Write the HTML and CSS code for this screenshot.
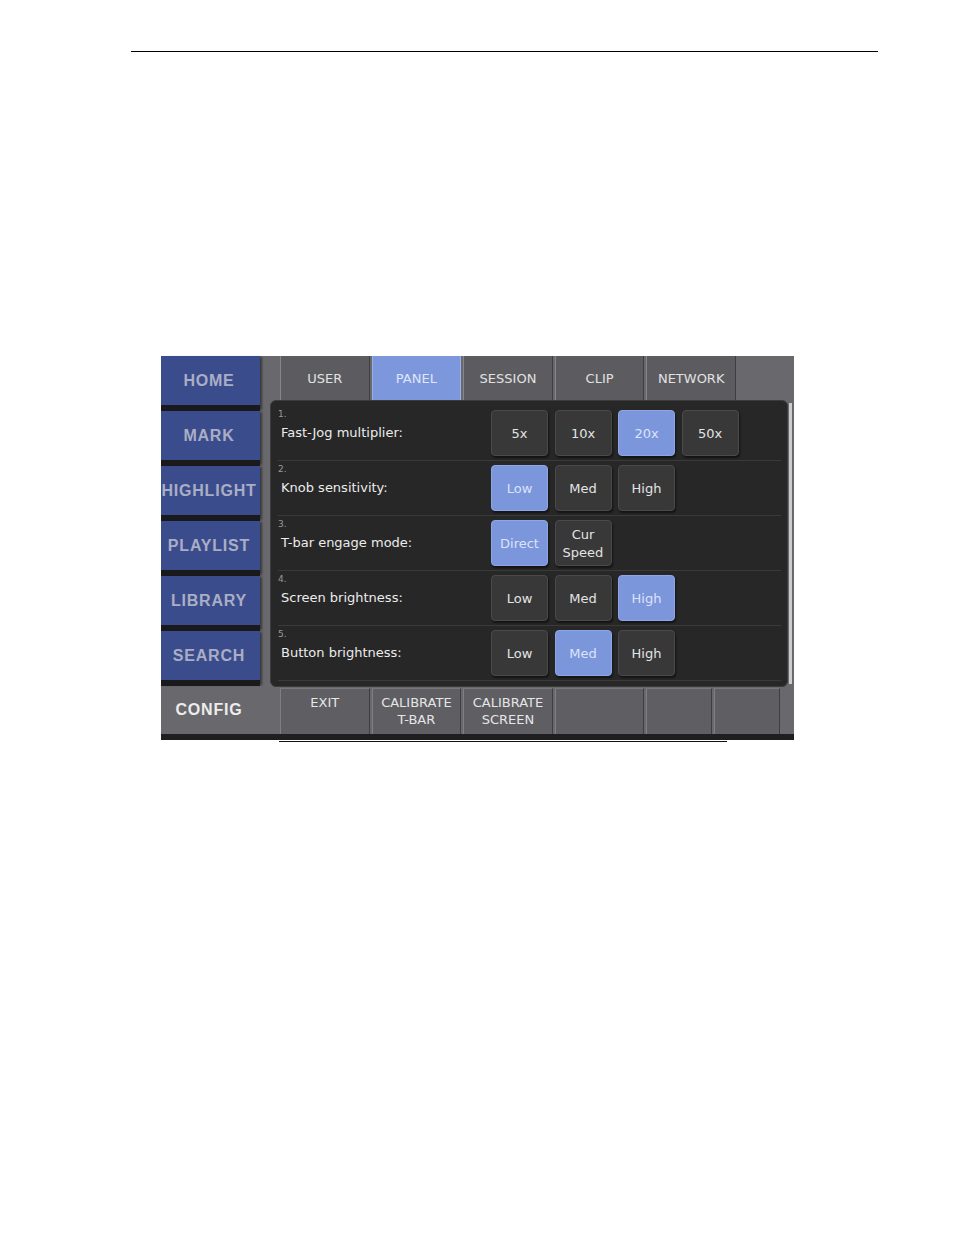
FILE: index.html
```html
<!DOCTYPE html>
<html>
<head>
<meta charset="utf-8">
<link rel="stylesheet" href="styles.css">
</head>
<body>
<div class="page">
  <div class="rule"></div>
  <figure class="shot">
    <div class="ui">
      <nav class="side">
        <div class="sb">HOME</div>
        <div class="sb">MARK</div>
        <div class="sb">HIGHLIGHT</div>
        <div class="sb">PLAYLIST</div>
        <div class="sb">LIBRARY</div>
        <div class="sb">SEARCH</div>
        <div class="sb config">CONFIG</div>
      </nav>
      <div class="main">
        <div class="tabs">
          <div class="tab">USER</div>
          <div class="tab on">PANEL</div>
          <div class="tab">SESSION</div>
          <div class="tab">CLIP</div>
          <div class="tab">NETWORK</div>
        </div>
        <div class="body">
          <div class="panel">
            <div class="row">
              <div class="label"><div class="num">1.</div><div class="text">Fast-Jog multiplier:</div></div>
              <div class="opts">
                <div class="btn">5x</div>
                <div class="btn">10x</div>
                <div class="btn on">20x</div>
                <div class="btn">50x</div>
              </div>
            </div>
            <div class="row">
              <div class="label"><div class="num">2.</div><div class="text">Knob sensitivity:</div></div>
              <div class="opts">
                <div class="btn on">Low</div>
                <div class="btn">Med</div>
                <div class="btn">High</div>
              </div>
            </div>
            <div class="row">
              <div class="label"><div class="num">3.</div><div class="text">T-bar engage mode:</div></div>
              <div class="opts">
                <div class="btn on">Direct</div>
                <div class="btn">Cur<br>Speed</div>
              </div>
            </div>
            <div class="row">
              <div class="label"><div class="num">4.</div><div class="text">Screen brightness:</div></div>
              <div class="opts">
                <div class="btn">Low</div>
                <div class="btn">Med</div>
                <div class="btn on">High</div>
              </div>
            </div>
            <div class="row">
              <div class="label"><div class="num">5.</div><div class="text">Button brightness:</div></div>
              <div class="opts">
                <div class="btn">Low</div>
                <div class="btn on">Med</div>
                <div class="btn">High</div>
              </div>
            </div>
          </div>
          <div class="scroll"><div class="thumb"></div></div>
        </div>
        <div class="actions">
          <div class="act">EXIT</div>
          <div class="act">CALIBRATE<br>T-BAR</div>
          <div class="act">CALIBRATE<br>SCREEN</div>
          <div class="act"></div>
          <div class="act sm"></div>
          <div class="act sm"></div>
        </div>
      </div>
    </div>
    <div class="underline"></div>
  </figure>
</div>
</body>
</html>
```
FILE: styles.css
```css
* { box-sizing: border-box; }
body { margin: 0; background: #fff; font-family: "DejaVu Sans", "Liberation Sans", sans-serif; }
.page { padding-top: 51px; }
.rule { margin-left: 131px; width: 747px; height: 1px; background: #000; }
.shot { margin: 304px 0 0 161px; width: 633px; }
.ui { display: flex; width: 633px; background: #68686d; border-bottom: 6px solid #1f1f21; }

.side { width: 99px; display: flex; flex-direction: column; }
.sb {
  height: 55px; border-bottom: 6px solid #1a1a1c; background: #3b4c8d;
  color: #a9aec4; font: bold 16px "Liberation Sans", Arial, sans-serif; letter-spacing: 0.8px;
  display: flex; align-items: center; justify-content: center; padding-right: 3px;
  white-space: nowrap; overflow: hidden;
  box-shadow: 3px 0 2px -1px rgba(0, 0, 0, 0.45);
}
.sb.config { height: 48px; border-bottom: 0; background: transparent; color: #ececec; box-shadow: none; }

.main { flex: 1; margin-left: 10px; display: flex; flex-direction: column; }
.tabs { height: 44px; display: flex; gap: 2px; padding-left: 10px; }
.tab {
  width: 89.6px; background: #5b5b60; border-left: 1px solid #85858a; border-right: 1px solid #3f3f43;
  color: #e2e2e2; font-size: 13px; display: flex; align-items: center; justify-content: center;
}
.tab.on { background: #7d97dc; color: #dfe6fa; border-color: #9bb0ea; }

.body { display: flex; height: 287px; }
.panel { flex: 1; background: #272727; border: 1px solid #3b3b3b; border-radius: 6px; padding: 5px 6px 5px 7px; }
.scroll { width: 6px; padding: 3px 2px 3px 1px; }
.thumb { height: 100%; background: #cbcbcb; }

.row { height: 55px; display: flex; align-items: center; border-bottom: 1px solid #3a3a3a; }
.label { width: 212px; align-self: flex-start; padding-top: 3px; }
.num { font-size: 9px; line-height: 10px; color: #9a9a9a; }
.text { font-size: 13px; line-height: 18px; margin-top: 5px; padding-left: 3px; color: #ececec; }
.opts { display: flex; gap: 6.5px; padding-left: 1px; }
.btn {
  width: 57px; height: 46px; border-radius: 4px; background: #383838; border: 1px solid #4a4a4a;
  box-shadow: 1px 2px 2px rgba(0, 0, 0, 0.5); color: #e4e4e4; font-size: 13px; line-height: 18px;
  display: flex; align-items: center; justify-content: center; text-align: center; padding-top: 2px;
}
.btn.on { background: #7c96dc; border-color: #8ea6e8; color: #dbe3f9; }

.actions { height: 46px; display: flex; gap: 2px; padding-left: 10px; margin-top: 1px; }
.act {
  width: 89.6px; background: #5e5e63; border-left: 1px solid #7e7e83; border-top: 1px solid #77777c;
  border-right: 1px solid #3e3e42; color: #e6e6e6; font-size: 13px; line-height: 17px;
  text-align: center; padding-top: 5px;
}
.act.sm { width: 66px; }

.underline { margin: 1px 0 0 118px; width: 448px; height: 1px; background: #111; }
```
